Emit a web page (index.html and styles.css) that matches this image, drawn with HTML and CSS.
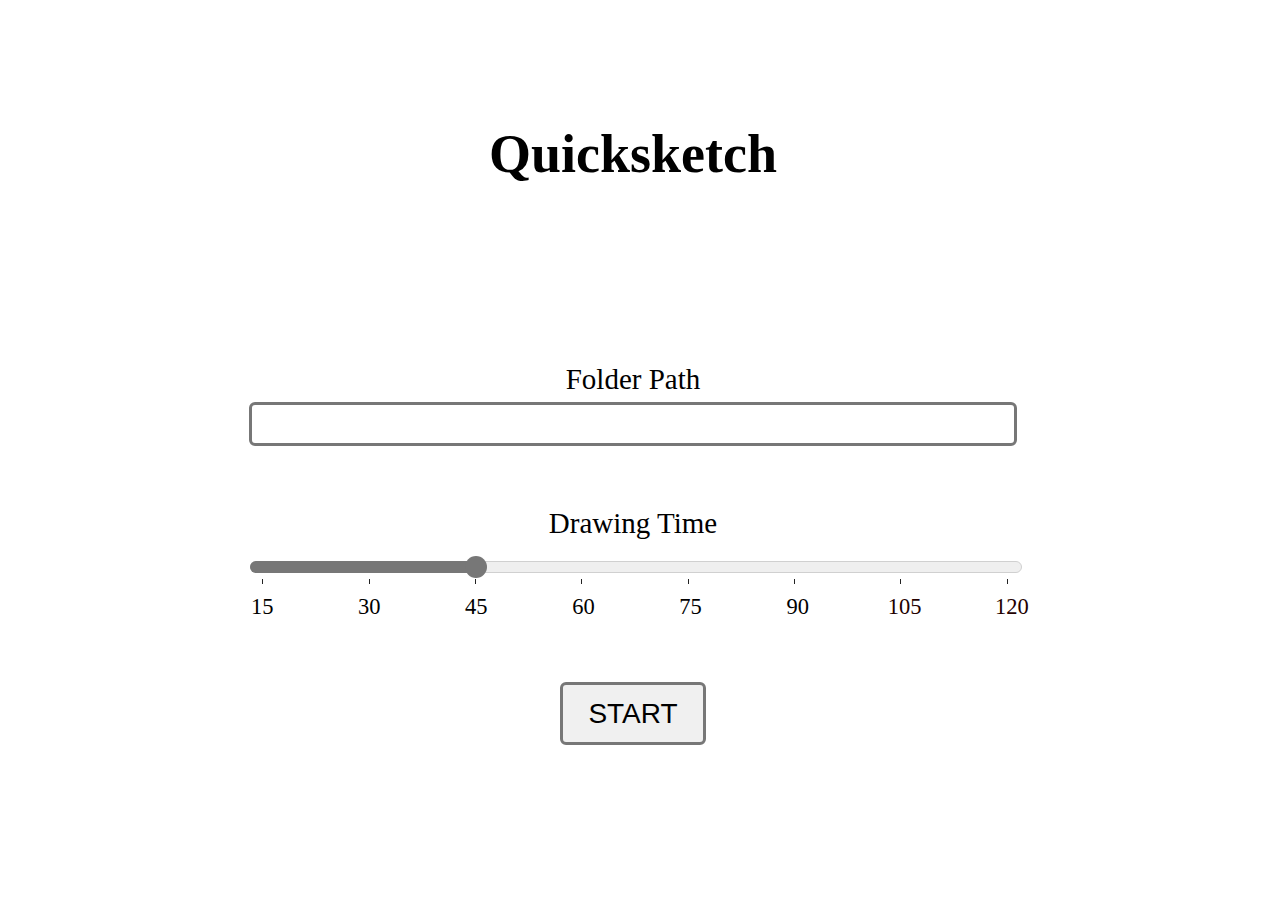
FILE: index.html
```html
<!DOCTYPE html>
<html lang="en">
<head>
<meta charset="utf-8">
<title>Quicksketch</title>
<link rel="stylesheet" href="styles.css">
</head>
<body>
<main class="app">
  <h1 class="title">Quicksketch</h1>

  <section class="field folder">
    <label class="field-label" for="folder">Folder Path</label>
    <input class="path-input" id="folder" type="text">
  </section>

  <section class="field time">
    <div class="field-label">Drawing Time</div>
    <div class="slider">
      <div class="track">
        <div class="fill" style="width: 225px"></div>
        <div class="thumb" style="left: 214px"></div>
      </div>
    </div>
    <div class="ticks">
      <span class="tick"></span><span class="tick"></span><span class="tick"></span><span class="tick"></span>
      <span class="tick"></span><span class="tick"></span><span class="tick"></span><span class="tick"></span>
    </div>
    <div class="scale">
      <span>15</span><span>30</span><span>45</span><span>60</span>
      <span>75</span><span>90</span><span class="dark">105</span><span class="dark">120</span>
    </div>
  </section>

  <button class="start" type="button">START</button>
</main>
</body>
</html>
```

FILE: styles.css
```css
html, body {
  margin: 0;
  padding: 0;
  background: #ffffff;
}

body {
  font-family: "Liberation Serif", "Times New Roman", serif;
  color: #000;
}

.app {
  display: flex;
  flex-direction: column;
  align-items: center;
  padding-top: 124px;
}

.title {
  margin: 0;
  font-size: 54px;
  font-weight: bold;
  line-height: 60px;
}

.field {
  display: flex;
  flex-direction: column;
  align-items: center;
}

.folder {
  margin-top: 179px;
}

.field-label {
  font-size: 29px;
  line-height: 32px;
}

.path-input {
  box-sizing: border-box;
  width: 768px;
  height: 44px;
  margin-top: 7px;
  border: 3px solid #777777;
  border-radius: 6px;
  background: #fff;
  font-size: 20px;
  font-family: "Liberation Sans", Arial, sans-serif;
  padding: 0 8px;
  outline: none;
}

.time {
  margin-top: 61px;
}

.slider {
  width: 772px;
  height: 22px;
  margin-top: 17px;
  margin-left: 6px;
  display: flex;
  align-items: center;
}

.track {
  position: relative;
  box-sizing: border-box;
  width: 100%;
  height: 12px;
  background: #efefef;
  border: 1px solid #d0d0d0;
  border-radius: 6px;
}

.fill {
  height: 12px;
  margin: -1px 0 0 -1px;
  background: #777777;
  border-radius: 6px 0 0 6px;
}

.thumb {
  position: absolute;
  top: -6px;
  width: 22px;
  height: 22px;
  border-radius: 50%;
  background: #777777;
}

.ticks {
  display: grid;
  grid-template-columns: repeat(8, 106.3px);
  justify-items: center;
  margin-top: 1px;
  margin-left: 4px;
}

.tick {
  display: block;
  width: 1px;
  height: 5px;
  background: #222;
}

.scale {
  display: grid;
  grid-template-columns: repeat(8, 107.1px);
  justify-items: center;
  margin-top: 11px;
  margin-left: 8px;
  font-size: 22.5px;
  line-height: 24px;
}

.scale .dark {
  color: #220000;
}

.start {
  margin-top: 63px;
  box-sizing: border-box;
  width: 146px;
  height: 63px;
  padding: 0;
  border: 3px solid #777777;
  border-radius: 6px;
  background: #f0f0f0;
  font-family: "Liberation Sans", Arial, sans-serif;
  font-size: 28px;
  color: #000;
  cursor: pointer;
}
```
